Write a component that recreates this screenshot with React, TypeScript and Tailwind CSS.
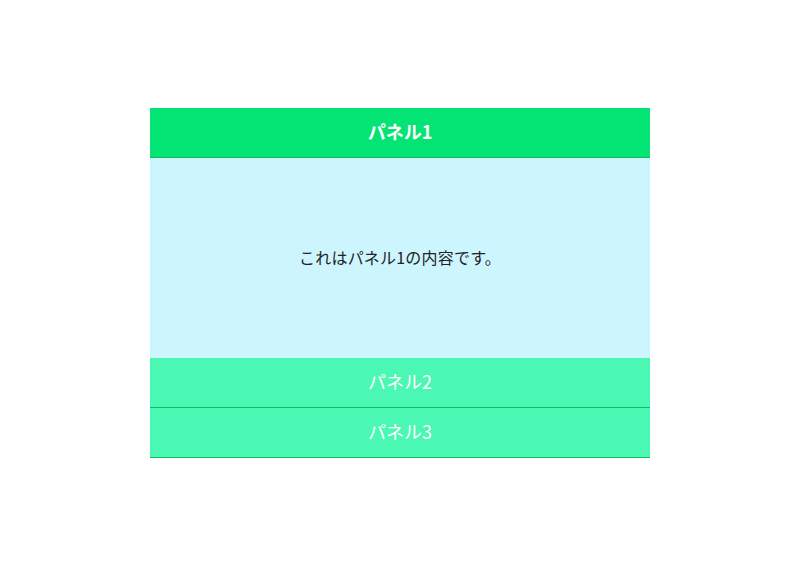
import { useState } from "react";

const panels = [
  { title: "パネル1", body: "これはパネル1の内容です。" },
  { title: "パネル2", body: "これはパネル2の内容です。" },
  { title: "パネル3", body: "これはパネル3の内容です。" },
];

export default function App() {
  const [open, setOpen] = useState(0);

  return (
    <div
      className="flex items-center justify-center h-[566px] bg-white"
      style={{ fontFamily: '"Noto Sans CJK JP", "Noto Sans", sans-serif' }}
    >
      <div className="w-[500px] flex flex-col">
        {panels.map((p, i) => (
          <div key={p.title}>
            <button
              type="button"
              onClick={() => setOpen(i)}
              className={
                "w-full h-[50px] pb-[3px] flex items-center justify-center border-b border-[#0cbf62] text-white text-lg cursor-pointer " +
                (open === i ? "bg-[#03e474] font-bold" : "bg-[#4af8b4]")
              }
            >
              {p.title}
            </button>
            {open === i && (
              <div className="h-[200px] pb-[2px] flex items-center justify-center bg-[#cdf5fe] text-[#222] text-base tracking-[0.2px]">
                {p.body}
              </div>
            )}
          </div>
        ))}
      </div>
    </div>
  );
}
